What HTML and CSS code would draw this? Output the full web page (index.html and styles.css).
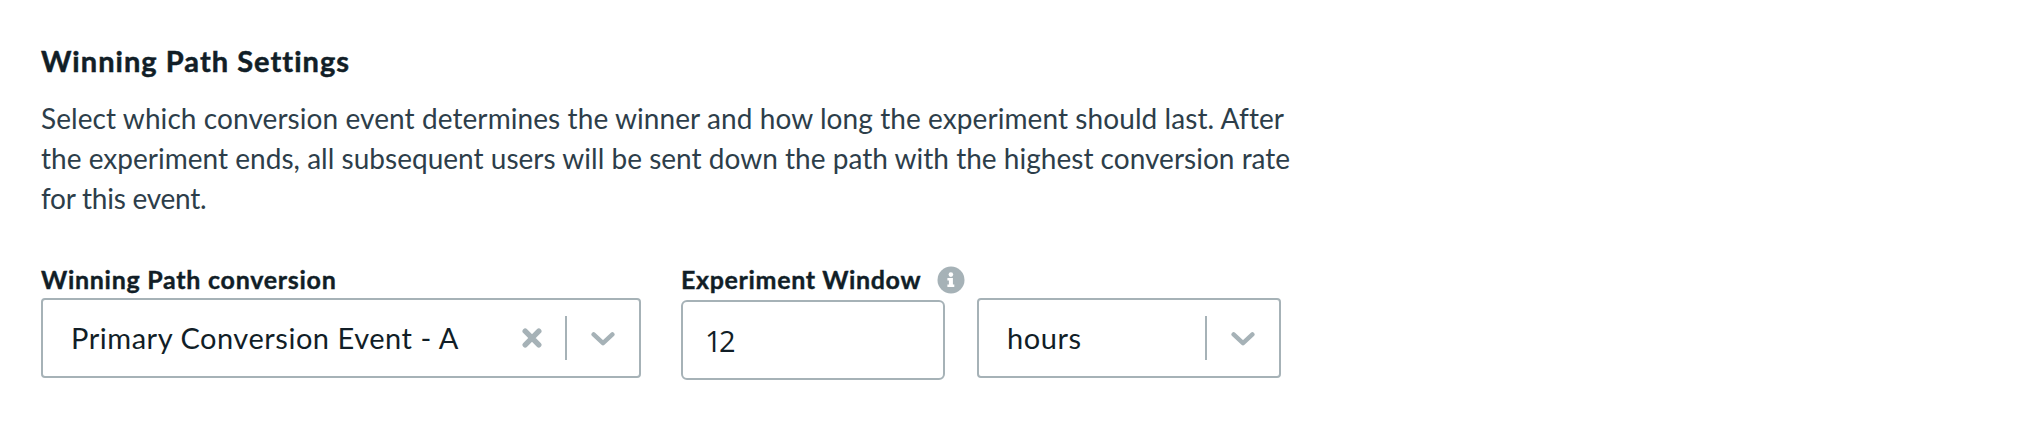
FILE: index.html
```html
<!DOCTYPE html>
<html lang="en">
<head>
<meta charset="utf-8">
<title>Winning Path Settings</title>
<link rel="stylesheet" href="styles.css">
</head>
<body>
<section class="settings">
  <h2 class="title"><span>Winning Path Settings</span></h2>
  <p class="description">
    <span class="line line-a">Select which conversion event determines the winner and how long the experiment should last. After</span>
    <span class="line line-b">the experiment ends, all subsequent users will be sent down the path with the highest conversion rate</span>
    <span class="line line-c">for this event.</span>
  </p>
  <div class="fields">
    <div class="field field-event">
      <div class="label"><span class="label-event">Winning Path conversion</span></div>
      <div class="select">
        <span class="value"><span class="value-event">Primary Conversion Event - A</span></span>
        <svg class="clear" viewBox="0 0 20 20"><path d="M3.2 3.2L16.8 16.8M16.8 3.2L3.2 16.8"/></svg>
        <span class="divider"></span>
        <svg class="chevron" viewBox="0 0 24 16"><path d="M2.6 3.4L12 12.2L21.4 3.4"/></svg>
      </div>
    </div>
    <div class="field field-window">
      <div class="label">
        <span class="label-window">Experiment Window</span>
        <svg class="info" viewBox="0 0 28 28"><circle cx="14" cy="14" r="13.5"/><circle cx="13.9" cy="8.6" r="2.3"/><path d="M10.4 11.9h5.5v6.6h1.4v2.5h-6.9v-2.5h1.5v-4.1h-1.5z"/></svg>
      </div>
      <div class="input"><span class="value-number">12</span></div>
    </div>
    <div class="select select-unit">
      <span class="value"><span class="value-unit">hours</span></span>
      <span class="divider"></span>
      <svg class="chevron" viewBox="0 0 24 16"><path d="M2.6 3.4L12 12.2L21.4 3.4"/></svg>
    </div>
  </div>
</section>
</body>
</html>
```
FILE: styles.css
```css
* { box-sizing: border-box; }
body {
  margin: 0;
  background: #fff;
  color: #111e27;
  font-family: Lato, "Open Sans", sans-serif;
  font-variant-ligatures: none;
}
.settings { padding: 40px 41px 0; }
.title {
  margin: 0;
  height: 44px;
  font-size: 29px;
  line-height: 42px;
  font-weight: 700;
  letter-spacing: 1.04px;
  white-space: nowrap;
  -webkit-text-stroke: 0.5px currentColor;
}
.description {
  margin: 14px 0 0;
  font-size: 28px;
  line-height: 40px;
  color: #2d3e4a;
  white-space: nowrap;
}
.line { display: block; width: max-content; }
.line-a { letter-spacing: 0.08px; }
.line-b { letter-spacing: 0.02px; }
.line-c { letter-spacing: -0.25px; }
.fields { display: flex; align-items: flex-start; margin-top: 42px; }
.field-event { width: 600px; margin-right: 40px; }
.field-window { width: 264px; margin-right: 32px; }
.label {
  display: flex;
  align-items: center;
  height: 38px;
  font-size: 25px;
  font-weight: 700;
  line-height: 38px;
  white-space: nowrap;
  -webkit-text-stroke: 0.4px currentColor;
}
.label-event { letter-spacing: 0.73px; }
.label-window { letter-spacing: 0.65px; }
.info { flex: none; width: 28px; height: 28px; margin: 1px 0 0 16px; fill: #a6b2b7; -webkit-text-stroke: 0; }
.info path, .info circle + circle { fill: #fff; }
.select, .input {
  display: flex;
  align-items: center;
  height: 80px;
  border: 2px solid #a6b2b7;
  border-radius: 4px;
  font-size: 29px;
  white-space: nowrap;
}
.input { margin-top: 2px; padding-left: 22px; border-radius: 6px; }
.select-unit { width: 304px; margin-top: 38px; }
.value { flex: 1; padding: 0 0 2px 28px; letter-spacing: 0.53px; }
.value-number { font-family: "Open Sans", sans-serif; letter-spacing: -2.5px; }
.clear, .chevron { fill: none; stroke: #a6b2b7; stroke-linecap: round; stroke-linejoin: round; }
.clear { width: 20px; height: 20px; margin-right: 23px; stroke-width: 5.4; }
.divider { width: 2px; height: 44px; background: #a6b2b7; }
.chevron { width: 24px; height: 16px; margin: 2px 24px 0; stroke-width: 4.4; }
```
